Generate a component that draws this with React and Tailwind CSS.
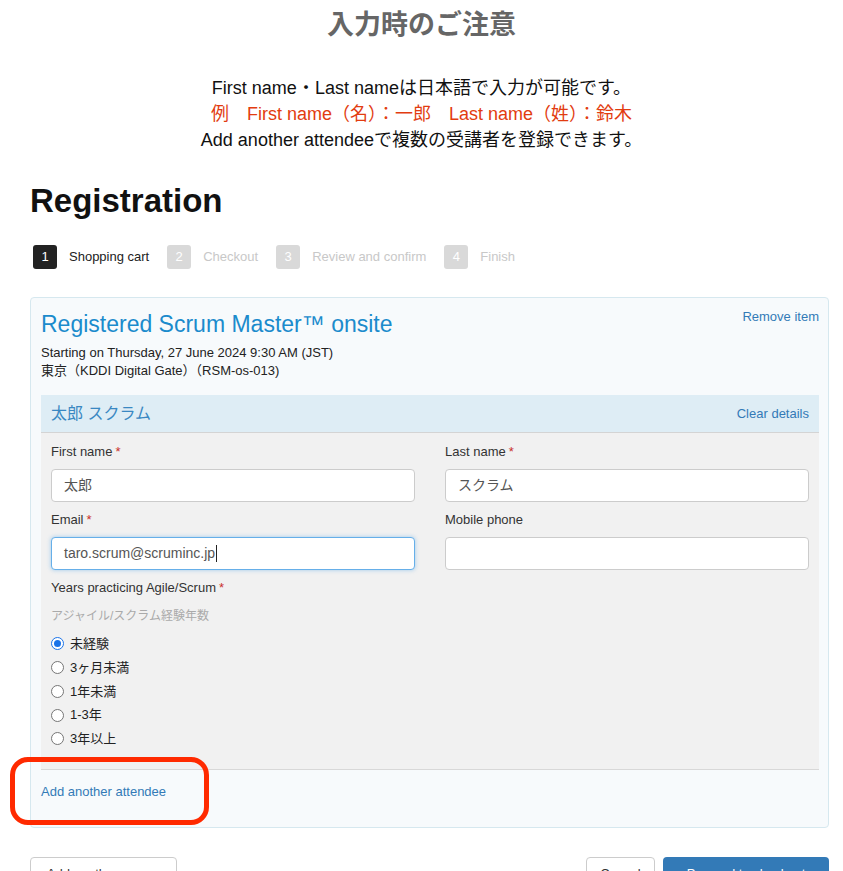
import React from "react";

const font = { fontFamily: '"Liberation Sans", "Noto Sans CJK JP", sans-serif' };

const steps = [
  { n: 1, label: "Shopping cart", active: true },
  { n: 2, label: "Checkout" },
  { n: 3, label: "Review and confirm" },
  { n: 4, label: "Finish" },
];

const years = ["未経験", "3ヶ月未満", "1年未満", "1-3年", "3年以上"];

function Field({ label, required, value, focused }) {
  return (
    <div>
      <div className="text-[13px] leading-[18px] text-[#333]">
        {label}
        {required && <span className="ml-[3px] text-[#c9302c]">*</span>}
      </div>
      <div
        className={
          "mt-[8px] h-[33px] rounded-[4px] bg-white px-[12px] flex items-center text-[14px] text-[#555] border " +
          (focused
            ? "border-[#66afe9] shadow-[0_0_4px_rgba(102,175,233,0.6)]"
            : "border-[#ccc]")
        }
      >
        {value}
        {focused && <span className="ml-[1px] h-[17px] w-px bg-[#222]" />}
      </div>
    </div>
  );
}

export default function App() {
  return (
    <div className="min-h-screen bg-white overflow-hidden" style={font}>
      <div className="pt-[8px] text-center">
        <h1 className="text-[27px] leading-[34px] font-bold text-[#666]">入力時のご注意</h1>
        <div className="mt-[33px] text-[18px] leading-[26px] text-[#111]">
          <p>First name・Last nameは日本語で入力が可能です。</p>
          <p className="text-[#e23c10]">例　First name（名）：一郎　Last name（姓）：鈴木</p>
          <p>Add another attendeeで複数の受講者を登録できます。</p>
        </div>
      </div>

      <div className="pl-[30px] pr-[14px]">
        <h2 className="mt-[28px] text-[33px] leading-[40px] font-bold text-[#111]">Registration</h2>

        <div className="mt-[24px] ml-[3px] flex items-center gap-[18px]">
          {steps.map((s) => (
            <div key={s.n} className="flex items-center gap-[12px]">
              <span
                className={
                  "flex h-[24px] w-[24px] items-center justify-center rounded-[3px] text-[13px] text-white " +
                  (s.active ? "bg-[#222]" : "bg-[#d9d9d9]")
                }
              >
                {s.n}
              </span>
              <span className={"text-[13px] " + (s.active ? "text-[#222]" : "text-[#c8c8c8]")}>
                {s.label}
              </span>
            </div>
          ))}
        </div>

        <div className="relative mt-[28px] rounded-[4px] border border-[#d6e8ef] bg-[#f7fafc] pt-[9px] pl-[10px] pr-[9px] pb-[26px]">
          <div className="flex items-start justify-between">
            <div className="mt-[3px] text-[23px] leading-[28px] text-[#1b8bcc]">
              Registered Scrum Master™ onsite
            </div>
            <a className="mt-[1px] text-[13px] leading-[18px] text-[#337ab7]">Remove item</a>
          </div>
          <div className="mt-[6px] text-[13px] leading-[18px] text-[#222]">
            <p>Starting on Thursday, 27 June 2024 9:30 AM (JST)</p>
            <p>東京（KDDI Digital Gate）（RSM-os-013)</p>
          </div>

          <div className="mt-[15px]">
            <div className="flex h-[38px] items-center justify-between border-b border-[#d4d4d4] bg-[#deedf5] px-[10px]">
              <span className="text-[16px] text-[#3a88c2]">太郎 スクラム</span>
              <a className="text-[13px] text-[#337ab7]">Clear details</a>
            </div>
            <div className="border-b border-[#d8d8d8] bg-[#f1f1f1] px-[10px] pt-[10px] pb-[18px]">
              <div className="grid grid-cols-2 gap-x-[30px] gap-y-[9px]">
                <Field label="First name" required value="太郎" />
                <Field label="Last name" required value="スクラム" />
                <Field label="Email" required value="taro.scrum@scruminc.jp" focused />
                <Field label="Mobile phone" />
              </div>
              <div className="mt-[9px] text-[13px] leading-[18px] text-[#333]">
                Years practicing Agile/Scrum<span className="ml-[3px] text-[#c9302c]">*</span>
              </div>
              <div className="mt-[10px] text-[12px] leading-[18px] text-[#aaa]">アジャイル/スクラム経験年数</div>
              <div className="mt-[7px]">
                {years.map((y, i) => (
                  <label key={y} className="flex h-[23.75px] items-center gap-[6px] text-[13px] text-[#222]">
                    {i === 0 ? (
                      <span className="flex h-[13px] w-[13px] items-center justify-center rounded-full border border-[#1a73e8] bg-white">
                        <span className="h-[7px] w-[7px] rounded-full bg-[#1a73e8]" />
                      </span>
                    ) : (
                      <span className="h-[13px] w-[13px] rounded-full border border-[#767676] bg-white" />
                    )}
                    {y}
                  </label>
                ))}
              </div>
            </div>
          </div>

          <a className="mt-[13px] block text-[13px] leading-[18px] text-[#337ab7]">Add another attendee</a>

          <div className="pointer-events-none absolute left-[-21px] bottom-[2px] h-[68px] w-[199px] rounded-[18px] border-[5px] border-[#ff2a00]" />
        </div>

        <div className="mt-[29px] flex items-start justify-between">
          <button className="h-[34px] w-[147px] rounded-[4px] border border-[#ccc] bg-white text-[13px] text-[#333]">
            Add another course
          </button>
          <div className="flex gap-[8px]">
            <button className="h-[34px] w-[69px] rounded-[4px] border border-[#ccc] bg-white text-[13px] text-[#333]">
              Cancel
            </button>
            <button className="h-[34px] w-[166px] rounded-[4px] bg-[#337ab7] text-[13px] text-white">
              Proceed to checkout
            </button>
          </div>
        </div>
      </div>
    </div>
  );
}
